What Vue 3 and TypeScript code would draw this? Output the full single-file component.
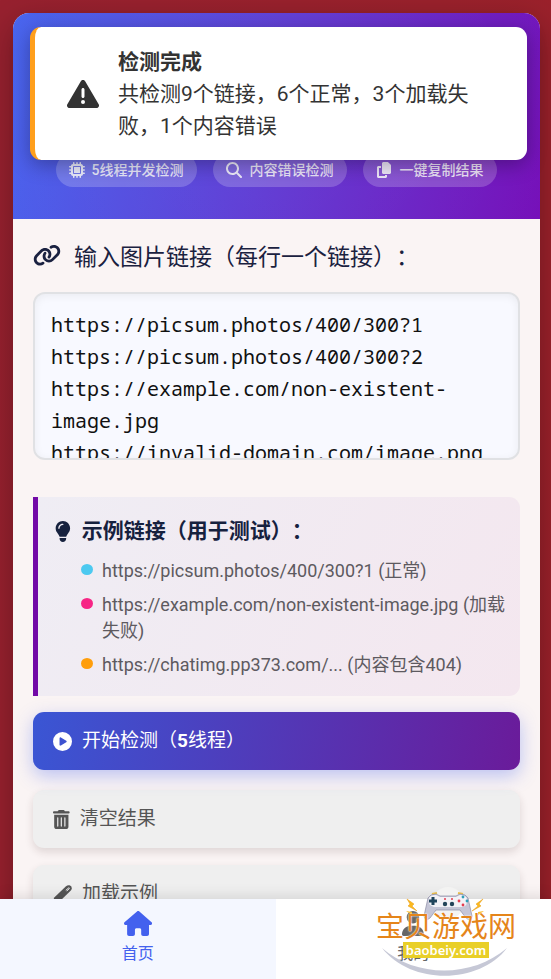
<script setup lang="ts">
import { ref } from 'vue'

interface Glyph {
  box: string
  path: string
}

const glyphs: Record<string, Glyph> = {
  warning: {
    box: '0 0 512 512',
    path: 'M256 32c14.2 0 27.3 7.5 34.5 19.8l216 368c7.3 12.4 7.3 27.7 .2 40.1S486.3 480 472 480H40c-14.3 0-27.6-7.7-34.7-20.1s-7-27.8 .2-40.1l216-368C228.7 39.5 241.8 32 256 32zm0 128c-13.3 0-24 10.7-24 24V296c0 13.3 10.7 24 24 24s24-10.7 24-24V184c0-13.3-10.7-24-24-24zm32 224a32 32 0 1 0 -64 0 32 32 0 1 0 64 0z',
  },
  chip: {
    box: '0 0 512 512',
    path: 'M176 24c0-13.3-10.7-24-24-24s-24 10.7-24 24V64c-35.3 0-64 28.7-64 64H24c-13.3 0-24 10.7-24 24s10.7 24 24 24H64v56H24c-13.3 0-24 10.7-24 24s10.7 24 24 24H64v56H24c-13.3 0-24 10.7-24 24s10.7 24 24 24H64c0 35.3 28.7 64 64 64v40c0 13.3 10.7 24 24 24s24-10.7 24-24V448h56v40c0 13.3 10.7 24 24 24s24-10.7 24-24V448h56v40c0 13.3 10.7 24 24 24s24-10.7 24-24V448c35.3 0 64-28.7 64-64h40c13.3 0 24-10.7 24-24s-10.7-24-24-24H448V280h40c13.3 0 24-10.7 24-24s-10.7-24-24-24H448V176h40c13.3 0 24-10.7 24-24s-10.7-24-24-24H448c0-35.3-28.7-64-64-64V24c0-13.3-10.7-24-24-24s-24 10.7-24 24V64H280V24c0-13.3-10.7-24-24-24s-24 10.7-24 24V64H176V24zM160 128H352c17.7 0 32 14.3 32 32V352c0 17.7-14.3 32-32 32H160c-17.7 0-32-14.3-32-32V160c0-17.7 14.3-32 32-32zm192 32H160V352H352V160z',
  },
  search: {
    box: '0 0 512 512',
    path: 'M416 208c0 45.9-14.9 88.3-40 122.7L502.6 457.4c12.5 12.5 12.5 32.8 0 45.3s-32.8 12.5-45.3 0L330.7 376c-34.4 25.2-76.8 40-122.7 40C93.1 416 0 322.9 0 208S93.1 0 208 0S416 93.1 416 208zM208 352a144 144 0 1 0 0-288 144 144 0 1 0 0 288z',
  },
  copy: {
    box: '0 0 448 512',
    path: 'M208 0H332.1c12.7 0 24.9 5.1 33.9 14.1l67.9 67.9c9 9 14.1 21.2 14.1 33.9V336c0 26.5-21.5 48-48 48H208c-26.5 0-48-21.5-48-48V48c0-26.5 21.5-48 48-48zM48 128h80v64H64V448H256V416h64v48c0 26.5-21.5 48-48 48H48c-26.5 0-48-21.5-48-48V176c0-26.5 21.5-48 48-48z',
  },
  link: {
    box: '0 0 640 512',
    path: 'M579.8 267.7c56.5-56.5 56.5-148 0-204.5c-50-50-128.8-56.5-186.3-15.4l-1.6 1.1c-14.4 10.3-17.7 30.3-7.4 44.6s30.3 17.7 44.6 7.4l1.6-1.1c32.1-22.9 76-19.3 103.8 8.6c31.5 31.5 31.5 82.5 0 114L422.3 334.8c-31.5 31.5-82.5 31.5-114 0c-27.9-27.9-31.5-71.8-8.6-103.8l1.1-1.6c10.3-14.4 6.9-34.4-7.4-44.6s-34.4-6.9-44.6 7.4l-1.1 1.6C206.5 251.2 213 330 263 380c56.5 56.5 148 56.5 204.5 0L579.8 267.7zM60.2 244.3c-56.5 56.5-56.5 148 0 204.5c50 50 128.8 56.5 186.3 15.4l1.6-1.1c14.4-10.3 17.7-30.3 7.4-44.6s-30.3-17.7-44.6-7.4l-1.6 1.1c-32.1 22.9-76 19.3-103.8-8.6C74 372 74 321 105.5 289.5L217.7 177.2c31.5-31.5 82.5-31.5 114 0c27.9 27.9 31.5 71.8 8.6 103.9l-1.1 1.6c-10.3 14.4-6.9 34.4 7.4 44.6s34.4 6.9 44.6-7.4l1.1-1.6C433.5 260.8 427 182 377 132c-56.5-56.5-148-56.5-204.5 0L60.2 244.3z',
  },
  bulb: {
    box: '0 0 384 512',
    path: 'M272 384c9.6-31.9 29.5-59.1 49.2-86.2l0 0c5.2-7.1 10.4-14.2 15.4-21.4c19.8-28.5 31.4-63 31.4-100.3C368 78.8 289.2 0 192 0S16 78.8 16 176c0 37.3 11.6 71.9 31.4 100.3c5 7.2 10.2 14.3 15.4 21.4l0 0c19.8 27.1 39.7 54.4 49.2 86.2H272zM192 512c44.2 0 80-35.8 80-80V416H112v16c0 44.2 35.8 80 80 80zM112 176c0 8.8-7.2 16-16 16s-16-7.2-16-16c0-61.9 50.1-112 112-112c8.8 0 16 7.2 16 16s-7.2 16-16 16c-44.2 0-80 35.8-80 80z',
  },
  play: {
    box: '0 0 512 512',
    path: 'M0 256a256 256 0 1 1 512 0A256 256 0 1 1 0 256zM188.3 147.1c-7.6 4.2-12.3 12.3-12.3 20.9V344c0 8.7 4.7 16.7 12.3 20.9s16.8 4.1 24.3-.5l144-88c7.1-4.4 11.5-12.1 11.5-20.5s-4.4-16.1-11.5-20.5l-144-88c-7.4-4.5-16.7-4.7-24.3-.5z',
  },
  trash: {
    box: '0 0 448 512',
    path: 'M135.2 17.7C140.6 6.8 151.7 0 163.8 0H284.2c12.1 0 23.2 6.8 28.6 17.7L320 32h96c17.7 0 32 14.3 32 32s-14.3 32-32 32H32C14.3 96 0 81.7 0 64S14.3 32 32 32h96l7.2-14.3zM32 128H416V448c0 35.3-28.7 64-64 64H96c-35.3 0-64-28.7-64-64V128zm96 64c-8.8 0-16 7.2-16 16V432c0 8.8 7.2 16 16 16s16-7.2 16-16V208c0-8.8-7.2-16-16-16zm96 0c-8.8 0-16 7.2-16 16V432c0 8.8 7.2 16 16 16s16-7.2 16-16V208c0-8.8-7.2-16-16-16zm96 0c-8.8 0-16 7.2-16 16V432c0 8.8 7.2 16 16 16s16-7.2 16-16V208c0-8.8-7.2-16-16-16z',
  },
  home: {
    box: '0 0 576 512',
    path: 'M575.8 255.5c0 18-15 32.1-32 32.1h-32l.7 160.2c0 2.7-.2 5.4-.5 8.1V472c0 22.1-17.9 40-40 40H456c-1.1 0-2.2 0-3.3-.1c-1.4 .1-2.8 .1-4.2 .1H416 392c-22.1 0-40-17.9-40-40V448 384c0-17.7-14.3-32-32-32H256c-17.7 0-32 14.3-32 32v64 24c0 22.1-17.9 40-40 40H160 128.1c-1.5 0-3-.1-4.5-.2c-1.2 .1-2.4 .2-3.6 .2H104c-22.1 0-40-17.9-40-40V360c0-.9 0-1.9 .1-2.8V287.6H32c-18 0-32-14-32-32.1c0-9 3-17 10-24L266.4 8c7-7 15-8 22-8s15 2 21 7L564.8 231.5c8 7 12 15 11 24z',
  },
  user: {
    box: '0 0 448 512',
    path: 'M224 256A128 128 0 1 0 224 0a128 128 0 1 0 0 256zm-45.7 48C79.8 304 0 383.8 0 482.3C0 498.7 13.3 512 29.7 512H418.3c16.4 0 29.7-13.3 29.7-29.7C448 383.8 368.2 304 269.7 304H178.3z',
  },
}

const features = [
  { icon: 'chip', label: '5线程并发检测' },
  { icon: 'search', label: '内容错误检测' },
  { icon: 'copy', label: '一键复制结果' },
]

const examples = [
  { tone: 'ok', text: 'https://picsum.photos/400/300?1 (正常)' },
  { tone: 'fail', text: 'https://example.com/non-existent-image.jpg (加载失败)' },
  { tone: 'warn', text: 'https://chatimg.pp373.com/... (内容包含404)' },
]

const links = ref(
  [
    'https://picsum.photos/400/300?1',
    'https://picsum.photos/400/300?2',
    'https://example.com/non-existent-image.jpg',
    'https://invalid-domain.com/image.png',
  ].join('\n'),
)
</script>

<template>
  <div class="app">
    <main class="scroller">
      <section class="card">
        <header class="hero">
          <ul class="features">
            <li v-for="f in features" :key="f.label" class="feature">
              <svg class="icon" :viewBox="glyphs[f.icon].box" aria-hidden="true"><path :d="glyphs[f.icon].path" /></svg>
              <span>{{ f.label }}</span>
            </li>
          </ul>
        </header>

        <div class="content">
          <label class="field-label" for="links">
            <svg class="icon" :viewBox="glyphs.link.box" aria-hidden="true"><path :d="glyphs.link.path" /></svg>
            <span>输入图片链接（每行一个链接）：</span>
          </label>
          <textarea id="links" v-model="links" class="links" spellcheck="false"></textarea>

          <section class="examples">
            <h2 class="examples-title">
              <svg class="icon" :viewBox="glyphs.bulb.box" aria-hidden="true"><path :d="glyphs.bulb.path" /></svg>
              <span>示例链接（用于测试）：</span>
            </h2>
            <ul class="example-list">
              <li v-for="e in examples" :key="e.text" class="example">
                <i class="dot" :class="e.tone"></i>
                <span>{{ e.text }}</span>
              </li>
            </ul>
          </section>

          <div class="actions">
            <button type="button" class="btn primary">
              <svg class="icon" :viewBox="glyphs.play.box" aria-hidden="true"><path :d="glyphs.play.path" /></svg>
              <span>开始检测（<b>5</b>线程）</span>
            </button>
            <button type="button" class="btn">
              <svg class="icon" :viewBox="glyphs.trash.box" aria-hidden="true"><path :d="glyphs.trash.path" /></svg>
              <span>清空结果</span>
            </button>
            <button type="button" class="btn">
              <svg class="icon" viewBox="0 0 19 19" aria-hidden="true">
                <path d="M13 1.200Q14.500 0 16.500 .300Q19 1 18.800 3.500Q18.600 4.800 17.600 5.800L5.500 17.500 0 19l1-6.200z" />
                <path class="slit" d="M12.800 5.400l2.600-2.300q1-.600 1 .400l-2.600 2.500" />
              </svg>
              <span>加载示例</span>
            </button>
          </div>
        </div>
      </section>
    </main>

    <nav class="tabs">
      <a href="#home" class="tab active">
        <svg class="icon" :viewBox="glyphs.home.box" aria-hidden="true"><path :d="glyphs.home.path" /></svg>
        <span>首页</span>
      </a>
      <a href="#mine" class="tab">
        <svg class="icon" :viewBox="glyphs.user.box" aria-hidden="true"><path :d="glyphs.user.path" /></svg>
        <span>我的</span>
      </a>
    </nav>

    <aside class="toast" role="status">
      <svg class="icon" :viewBox="glyphs.warning.box" aria-hidden="true"><path :d="glyphs.warning.path" /></svg>
      <div class="toast-body">
        <strong>检测完成</strong>
        <p>共检测9个链接，6个正常，3个加载失败，1个内容错误</p>
      </div>
    </aside>

    <div class="brand">
      <svg class="brand-art" viewBox="0 0 140 94" aria-hidden="true">
        <circle cx="72" cy="18" r="16" fill="#f3f3f2" />
        <path d="M6 63C40 93 96 93 131 63C104 99 36 101 6 63z" fill="#c6c8d6" />
        <path d="M31 14l7 5-2 2 5 5-9-5 2-2z" fill="#fbb91d" stroke="#e79c1c" stroke-width=".5" />
        <path d="M107 14l-7 5 2 2-6 5 9-5-2-2z" fill="#fbb91d" stroke="#e79c1c" stroke-width=".5" />
        <path d="M30 26l6 1v3zM108 26l-6 1v3z" fill="#fbb91d" />
        <path d="M56 9l5-1M82 8l5 1" stroke="#e9bd4a" stroke-width="2" />
        <path d="M52 13Q54 9 60 9L64 11H80L84 9Q90 9 92 13L96 31Q95 37 90 33L84 25H60L54 33Q49 37 48 31z" fill="#c5c6d7" stroke="#8c8ca5" stroke-width=".7" />
        <path d="M53 13Q54 10 60 10L64 12H80L84 10Q90 10 91 14Q92 21 86 22H58Q51 20 53 13z" fill="#f3f2f7" />
        <path d="M57 12v8M53 16h8" stroke="#20455c" stroke-width="3" />
        <g fill="#e43d50">
          <circle cx="83" cy="16" r="1.400" /><circle cx="87" cy="20" r="1.400" />
          <circle cx="69" cy="14" r="1" /><circle cx="76" cy="14" r="1" />
        </g>
        <g fill="#2f9fb8">
          <circle cx="87" cy="12" r="1.400" /><circle cx="91" cy="16" r="1.400" />
        </g>
        <circle cx="69" cy="19" r="2.200" fill="#224459" />
        <circle cx="76" cy="19" r="2.200" fill="#224459" />
      </svg>
      <span class="brand-name">宝贝游戏网</span>
      <span class="brand-site">baobeiy.com</span>
    </div>
  </div>
</template>

<style>
body {
  margin: 0;
}
</style>

<style scoped>
.app {
  position: relative;
  display: flex;
  flex-direction: column;
  height: 100vh;
  overflow: hidden;
  background: linear-gradient(100deg, #97212f, #9c212a);
  color: #333;
  font-family: Roboto, "Noto Sans CJK SC", sans-serif;
  text-spacing-trim: space-all;
}

.app * {
  box-sizing: border-box;
}

.icon {
  flex: none;
  fill: currentColor;
}

ul {
  margin: 0;
  padding: 0;
  list-style: none;
}

.scroller {
  flex: 1;
  min-height: 0;
  padding: 13px 11px 24px 13px;
  overflow-y: auto;
  scrollbar-width: none;
}

.card {
  overflow: hidden;
  border-radius: 16px;
  background: #faf4f4;
  box-shadow: 0 10px 32px rgba(0, 0, 0, 0.3);
}

.hero {
  padding: 140px 16px 32px;
  background:
    radial-gradient(ellipse 76% 200% at 50% 40%, rgba(255, 255, 255, 0.06), rgba(255, 255, 255, 0.02) 98%, transparent 100%),
    linear-gradient(102deg, #4361ee, #7209b7);
}

.features {
  display: flex;
  justify-content: center;
  gap: 16px;
}

.feature {
  display: flex;
  align-items: center;
  gap: 7px;
  height: 34px;
  padding: 0 14px 0 13px;
  border-radius: 17px;
  background: rgba(255, 255, 255, 0.2);
  color: rgba(255, 255, 255, 0.86);
  font-size: 14px;
  font-weight: 500;
  line-height: 20px;
  white-space: nowrap;
}

.feature .icon {
  width: 16px;
  height: 16px;
}

.content {
  padding: 20px;
}

.field-label {
  display: flex;
  align-items: center;
  gap: 13px;
  height: 32px;
  margin-bottom: 21px;
  color: #1a2140;
  font-size: 23px;
}

.field-label .icon {
  width: 28px;
}

.links {
  display: block;
  width: 100%;
  height: 168px;
  padding: 15px 16px;
  border: 2px solid #e0e1e4;
  border-radius: 12px;
  outline: none;
  resize: none;
  background: #f8f9ff;
  box-shadow: inset 0 2px 8px rgba(0, 0, 0, 0.06);
  color: #111;
  font: 20px/32px "Noto Sans Mono", "DejaVu Sans Mono", monospace;
  scrollbar-width: none;
}

.examples {
  margin-top: 37px;
  padding: 18px 13px 18px 17px;
  border-left: 5px solid #7209a7;
  border-radius: 0 11px 11px 0;
  background: linear-gradient(115deg, #efedf4, #f4e7ef);
}

.examples-title {
  display: flex;
  align-items: center;
  gap: 11px;
  margin: 0 0 11px;
  color: #16213e;
  font-size: 21px;
  font-weight: 700;
  line-height: 32px;
}

.examples-title .icon {
  height: 21px;
}

.example-list {
  display: grid;
  gap: 8px;
  padding-left: 26px;
}

.example {
  display: flex;
  gap: 9px;
  color: #5d5a60;
  font-size: 18px;
  line-height: 26px;
}

.dot {
  flex: none;
  width: 12px;
  height: 11px;
  margin-top: 6px;
  border-radius: 50%;
}

.dot.ok {
  background: #4cc9f0;
}

.dot.fail {
  background: #f72585;
}

.dot.warn {
  background: #ff9e0b;
}

.actions {
  display: grid;
  gap: 17px;
  margin-top: 19px;
}

.btn {
  display: flex;
  align-items: center;
  gap: 10px;
  height: 58px;
  padding: 0 20px;
  border: 0;
  border-radius: 11px;
  background: #efefef;
  box-shadow: 0 4px 8px rgba(60, 30, 30, 0.14);
  color: #555;
  font-family: inherit;
  font-size: 19px;
  line-height: 28px;
  text-spacing-trim: inherit;
  cursor: pointer;
}

.btn .icon {
  height: 19px;
}

.slit {
  fill: none;
  stroke: #efefef;
  stroke-width: 1;
}

.btn.primary {
  background: linear-gradient(100deg, #3a56d4, #6a1b9a);
  box-shadow: 0 6px 18px rgba(67, 97, 238, 0.34);
  color: #fff;
  transform: translateY(-3px);
}

.tabs {
  position: relative;
  display: flex;
  flex: none;
  height: 80px;
  background: #fff;
  box-shadow: 0 -2px 14px rgba(0, 0, 0, 0.12);
}

.tab {
  display: flex;
  flex: 1;
  flex-direction: column;
  align-items: center;
  gap: 6px;
  padding-top: 12px;
  color: #666;
  font-size: 16px;
  line-height: 24px;
  text-decoration: none;
}

.tab .icon {
  height: 25px;
}

.tab.active {
  background: #f4f7ff;
  color: #4361ee;
}

.toast {
  position: absolute;
  top: 27px;
  right: 24px;
  left: 30px;
  display: flex;
  align-items: center;
  gap: 19px;
  padding: 19px 32px 18px;
  border-left: 5px solid #ff9f1c;
  border-radius: 11px;
  background: #fff;
  box-shadow: 0 5px 20px rgba(0, 0, 0, 0.3);
  color: #333;
  font-size: 21px;
  line-height: 32px;
}

.toast .icon {
  width: 32px;
}

.toast strong {
  display: block;
}

.toast p {
  margin: 0;
}

.brand {
  position: absolute;
  right: 35px;
  bottom: 0;
  display: flex;
  flex-direction: column;
  align-items: center;
  width: 140px;
  height: 94px;
  padding-top: 29px;
  pointer-events: none;
}

.brand-art {
  position: absolute;
  inset: 0;
  width: 100%;
  height: 100%;
}

.brand-name {
  position: relative;
  color: #e5851a;
  font-size: 28px;
  line-height: 28px;
  text-shadow: 0 0 2px #fff, 0 0 1px #fff;
  white-space: nowrap;
}

.brand-site {
  position: relative;
  padding: 0 3px;
  background: #e9cf28;
  color: #fff;
  font-family: "Noto Sans", sans-serif;
  font-size: 13px;
  font-weight: 600;
  line-height: 16px;
}
</style>
